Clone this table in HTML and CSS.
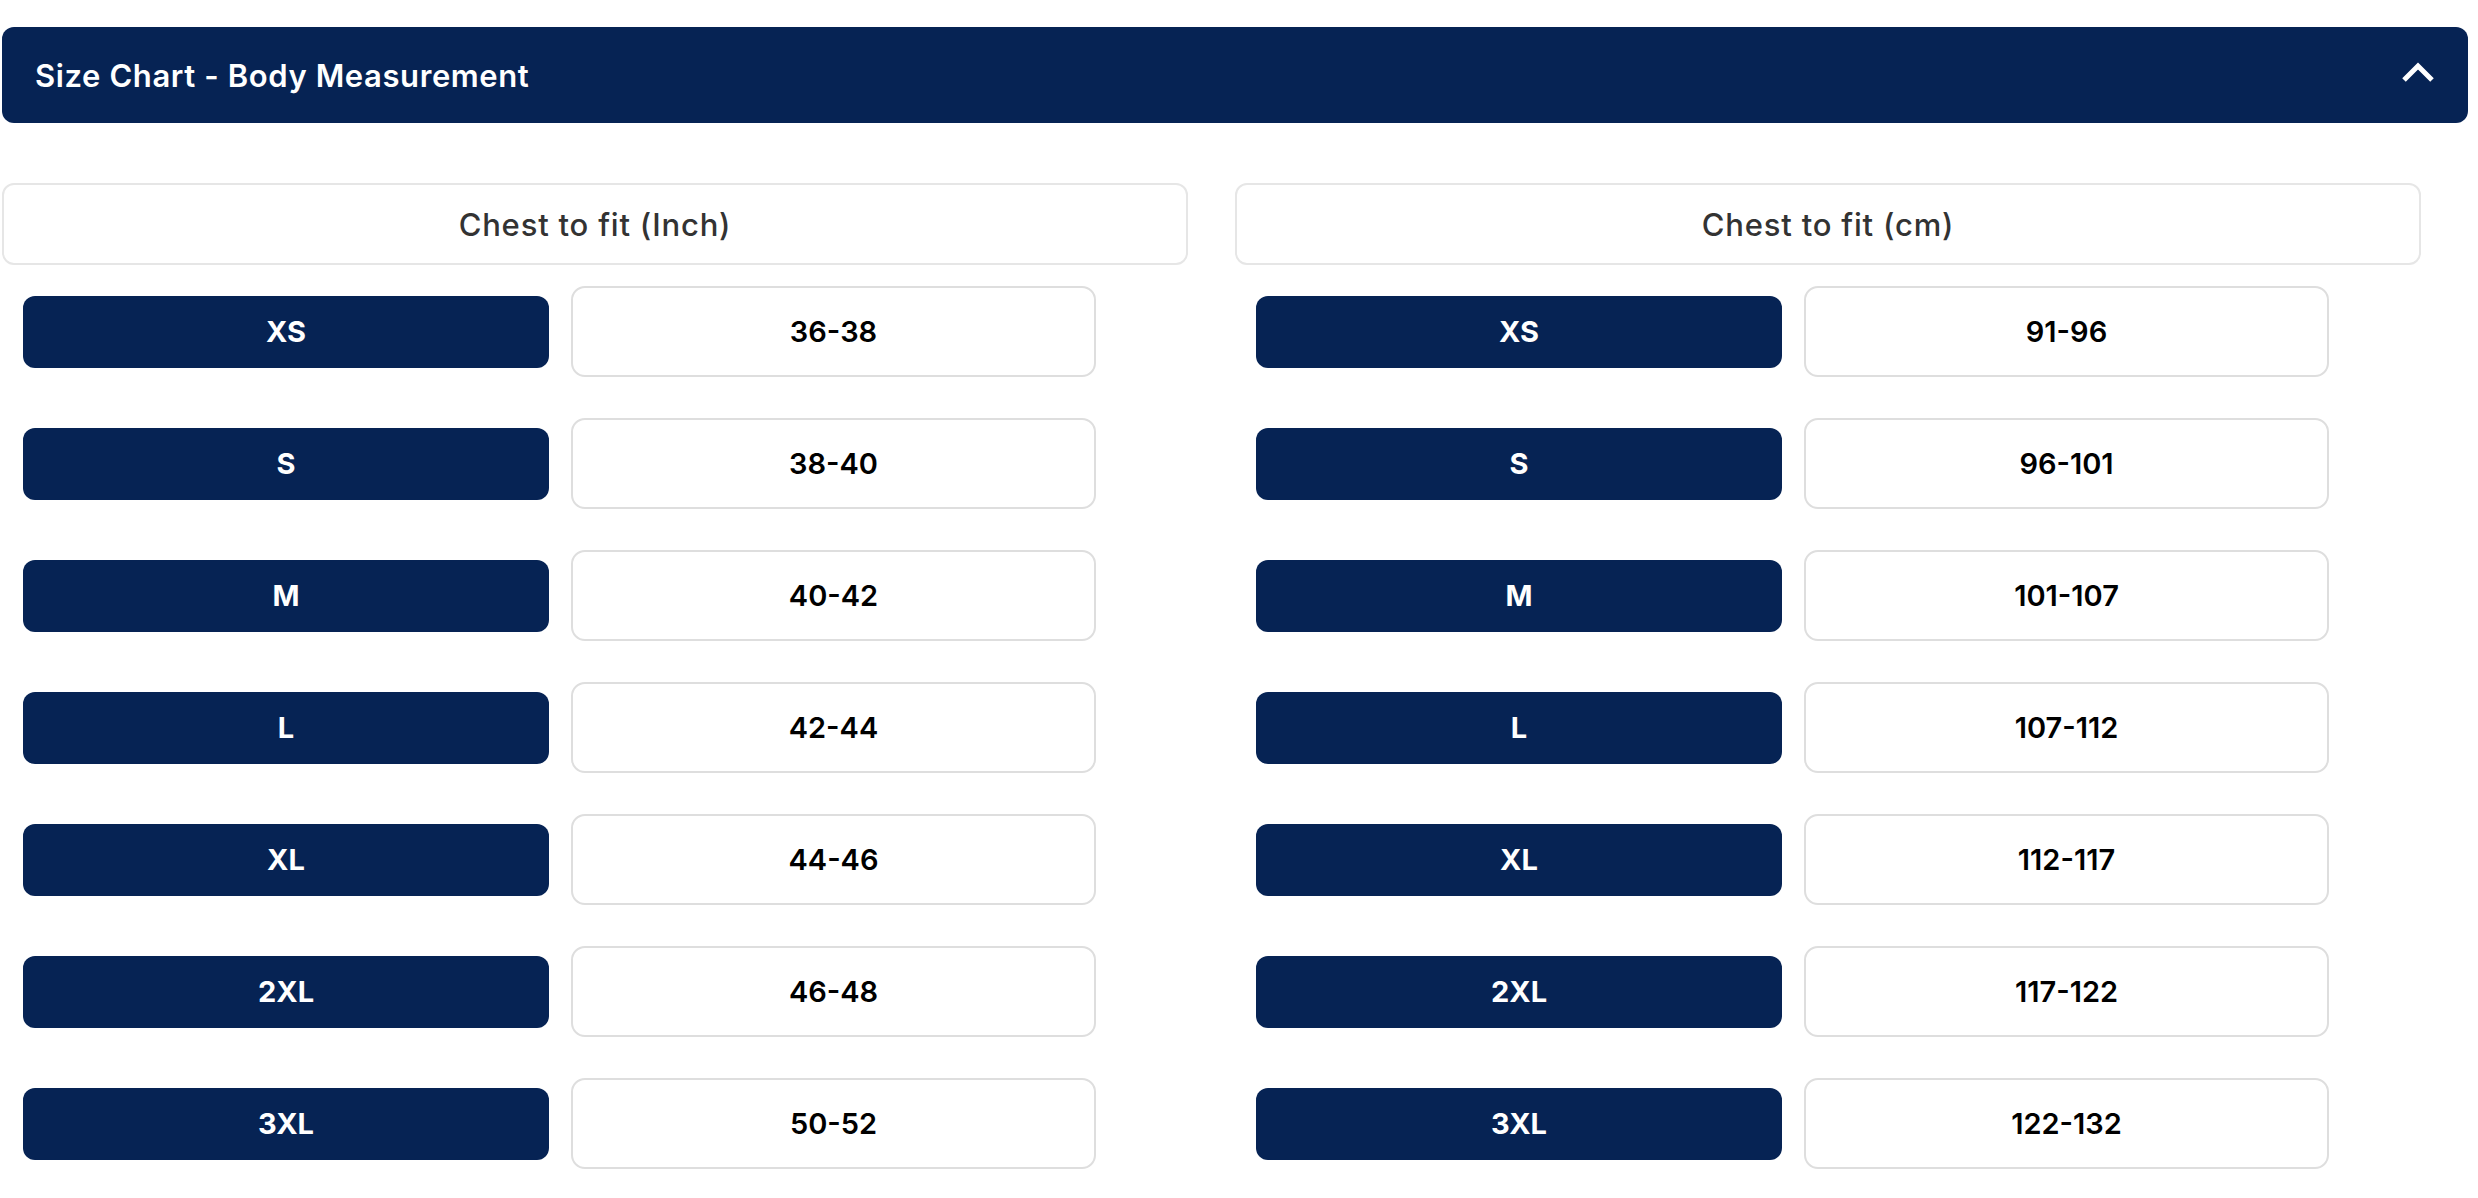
FILE: index.html
```html
<!DOCTYPE html>
<html lang="en">
<head>
  <meta charset="UTF-8" />
  <meta name="viewport" content="width=device-width, initial-scale=1.0" />
  <title>Size Chart</title>
  <link rel="stylesheet" href="styles.css">
</head>
<body>

  <section class="accordion">
    <div class="accordion-head">
      <h2>Size Chart - Body Measurement</h2>
      <svg class="chevron" width="32" height="22" viewBox="0 0 32 22">
        <polyline points="2,20 16,6 30,20" fill="none" stroke="#fff" stroke-width="5" />
      </svg>
    </div>

    <div class="chart">
      <div class="col">
        <div class="col-head">Chest to fit (Inch)</div>
        <div class="row"><div class="size">XS</div><div class="value">36-38</div></div>
        <div class="row"><div class="size">S</div><div class="value">38-40</div></div>
        <div class="row"><div class="size">M</div><div class="value">40-42</div></div>
        <div class="row"><div class="size">L</div><div class="value">42-44</div></div>
        <div class="row"><div class="size">XL</div><div class="value">44-46</div></div>
        <div class="row"><div class="size">2XL</div><div class="value">46-48</div></div>
        <div class="row"><div class="size">3XL</div><div class="value">50-52</div></div>
      </div>

      <div class="col">
        <div class="col-head">Chest to fit (cm)</div>
        <div class="row"><div class="size">XS</div><div class="value">91-96</div></div>
        <div class="row"><div class="size">S</div><div class="value">96-101</div></div>
        <div class="row"><div class="size">M</div><div class="value">101-107</div></div>
        <div class="row"><div class="size">L</div><div class="value">107-112</div></div>
        <div class="row"><div class="size">XL</div><div class="value">112-117</div></div>
        <div class="row"><div class="size">2XL</div><div class="value">117-122</div></div>
        <div class="row"><div class="size">3XL</div><div class="value">122-132</div></div>
      </div>
    </div>
  </section>

</body>
</html>
```

FILE: styles.css
```css
body {
  margin: 0;
  font-family: 'Inter', sans-serif;
  background-color: #fff;
  color: #111;
}

.accordion {
  width: 2466px;
  margin: 27px 0 0 2px;
}

.accordion-head {
  height: 96px;
  background-color: #062354;
  border-radius: 12px;
  display: flex;
  align-items: center;
  justify-content: space-between;
  padding: 0 34px 0 33px;
  box-sizing: border-box;
}

.accordion-head h2 {
  margin: 0;
  color: white;
  font-size: 31px;
  font-weight: 600;
  letter-spacing: 0.6px;
}

.chevron {
  display: block;
  margin-top: -8px;
}

.chart {
  display: flex;
  gap: 47px;
  margin-top: 60px;
}

.col {
  width: 1186px;
  display: flex;
  flex-direction: column;
  gap: 41px;
}

.col-head {
  height: 82px;
  box-sizing: border-box;
  border: 2px solid #e6e6e6;
  border-radius: 12px;
  display: flex;
  align-items: center;
  justify-content: center;
  font-size: 31px;
  font-weight: 500;
  letter-spacing: 0.8px;
  color: #333;
  margin-bottom: -20px;
}

.row {
  display: flex;
  align-items: center;
  gap: 22px;
  padding-left: 21px;
}

.size {
  width: 526px;
  height: 72px;
  background-color: #062354;
  border-radius: 12px;
  color: white;
  font-size: 29px;
  font-weight: 700;
  display: flex;
  align-items: center;
  justify-content: center;
}

.value {
  width: 525px;
  height: 91px;
  box-sizing: border-box;
  border: 2px solid #dedede;
  border-radius: 14px;
  font-size: 29px;
  font-weight: 600;
  color: #000;
  display: flex;
  align-items: center;
  justify-content: center;
}
```
